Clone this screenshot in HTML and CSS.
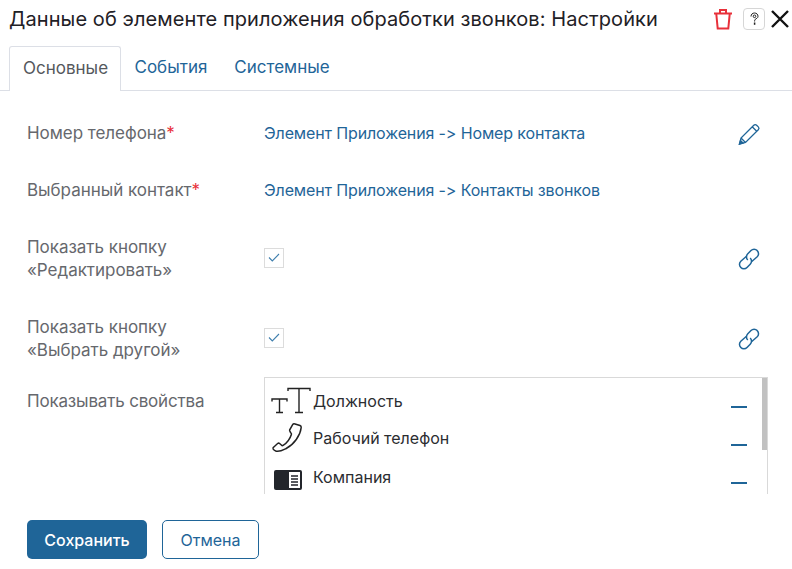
FILE: index.html
```html
<!DOCTYPE html>
<html lang="ru">
<head>
<meta charset="utf-8">
<title>Настройки</title>
<link rel="stylesheet" href="styles.css">
</head>
<body>
<div class="modal">
  <header class="head">
    <h1 class="title">Данные об элементе приложения обработки звонков: Настройки</h1>
    <div class="head-actions">
      <svg class="trash" width="20" height="22" viewBox="0 0 20 22" fill="none" stroke="#e8303a" stroke-width="2"><path d="M1 5.500h18M7 5V2h6V5M3.300 6l1.400 14.500h10.600L16.700 6"/></svg>
      <span class="help"><svg width="9" height="14" viewBox="0 0 9 14" fill="none" stroke="#222" stroke-width="1"><path d="M1 4.500C1 2.300 2.500 1 4.500 1S8 2.300 8 4.300c0 1.900-1.700 2.100-2.700 3-.5.500-.7 1-.7 2.200"/><circle cx="4.500" cy="4.300" r="1.300"/><path d="M4.600 10.500v2.300" stroke-width="1.500"/></svg></span>
      <svg class="close" width="20" height="20" viewBox="0 0 20 20" stroke="#111" stroke-width="2.400"><path d="M2 2l16 16M18 2L2 18"/></svg>
    </div>
  </header>
  <nav class="tabs">
    <span class="tab active">Основные</span>
    <span class="tab">События</span>
    <span class="tab">Системные</span>
  </nav>
  <main class="body">
    <div class="row row-single">
      <div class="label">Номер телефона<span class="req">*</span></div>
      <div class="value">Элемент Приложения -&gt; Номер контакта</div>
      <svg class="side" width="24" height="24" viewBox="0 0 24 24" fill="none" stroke="#1f6598" stroke-width="1.300"><path d="M2.500 22l1.500-6L16.800 3.200c.8-.8 2-.8 2.800 0l1.700 1.700c.8.800.8 2 0 2.800L8.500 20.500zM4 16l4.500 4.500M15.200 4.800l4.500 4.500"/><path d="M2.500 22l1-3.500 2.500 2.500z" fill="#1f6598"/></svg>
    </div>
    <div class="row row-single row-second">
      <div class="label">Выбранный контакт<span class="req">*</span></div>
      <div class="value">Элемент Приложения -&gt; Контакты звонков</div>
    </div>
    <div class="row row-check">
      <div class="label">Показать кнопку<br>«Редактировать»</div>
      <div class="value"><span class="check"><svg width="12" height="10" viewBox="0 0 12 10" fill="none" stroke="#3f7fae" stroke-width="1.100"><path d="M1 4.500L4.300 8 11 1"/></svg></span></div>
      <svg class="side" width="24" height="24" viewBox="0 0 24 24" fill="none" stroke="#1f6598" stroke-width="1.500"><path d="M9.500 9.300L3.800 14.200a4.300 4.300 0 0 0 0 6.200 4.300 4.300 0 0 0 6.200 0l3.200-3.200a4.300 4.300 0 0 0 0-6.200"/><path d="M14.500 14.700l5.700-4.900a4.300 4.300 0 0 0 0-6.200 4.300 4.300 0 0 0-6.200 0l-3.200 3.200a4.300 4.300 0 0 0 0 6.200"/></svg>
    </div>
    <div class="row row-check row-check-next">
      <div class="label">Показать кнопку<br>«Выбрать другой»</div>
      <div class="value"><span class="check"><svg width="12" height="10" viewBox="0 0 12 10" fill="none" stroke="#3f7fae" stroke-width="1.100"><path d="M1 4.500L4.300 8 11 1"/></svg></span></div>
      <svg class="side" width="24" height="24" viewBox="0 0 24 24" fill="none" stroke="#1f6598" stroke-width="1.500"><path d="M9.500 9.300L3.800 14.200a4.300 4.300 0 0 0 0 6.200 4.300 4.300 0 0 0 6.200 0l3.200-3.200a4.300 4.300 0 0 0 0-6.200"/><path d="M14.500 14.700l5.700-4.900a4.300 4.300 0 0 0 0-6.200 4.300 4.300 0 0 0-6.200 0l-3.200 3.200a4.300 4.300 0 0 0 0 6.200"/></svg>
    </div>
    <div class="row row-list">
      <div class="label">Показывать свойства</div>
      <div class="list">
        <div class="scrollbar"></div>
        <div class="item item-first">
          <svg class="item-icon" width="40" height="30" viewBox="0 0 40 30" fill="none" stroke="#222" stroke-width="1.400"><path d="M1 15.500v-2.500h15v2.500M8.500 13V26.500M5 26.500h7"/><path d="M17 5V2.500h22V5M28 2.500v24M24 26.500h8"/></svg>
          <span>Должность</span><i class="dash"></i>
        </div>
        <div class="item item-phone">
          <svg class="item-icon" width="40" height="34" viewBox="0 0 40 34" fill="none" stroke="#222" stroke-width="1.500"><path d="M24 2l5 1.500c1 .4 1.300 1 1.200 2-.8 8-7.300 17-15 21-3 1.500-6.500 3.500-10 2.700-1.200-.4-2.400-1-3-2-.4-.8-.2-1.500.4-2l4-3.700c.7-.5 1.400-.5 2 0l2 1.800c.5.400 1 .4 1.500.1 3.500-2.300 7-7 8.300-11 .2-.6 0-1-.5-1.400L19 9.500c-.5-.5-.5-1-.3-1.700l2.800-5c.5-.8 1.500-1.100 2.500-.8z"/></svg>
          <span>Рабочий телефон</span><i class="dash"></i>
        </div>
        <div class="item item-company">
          <svg class="item-icon" width="40" height="22" viewBox="0 0 40 22"><path d="M5 1h24a2 2 0 0 1 2 2v16a2 2 0 0 1-2 2H5a2 2 0 0 1-2-2V3a2 2 0 0 1 2-2z" fill="#22252b"/><path d="M18 3h11v16H18z" fill="#fff"/><path d="M20 7h7M20 10h7M20 13h7M20 16h7" stroke="#22252b" stroke-width="1.300"/></svg>
          <span>Компания</span><i class="dash"></i>
        </div>
      </div>
    </div>
  </main>
  <footer class="foot">
    <button class="btn primary" type="button">Сохранить</button>
    <button class="btn ghost" type="button">Отмена</button>
  </footer>
</div>
</body>
</html>
```

FILE: styles.css
```css
* { box-sizing: border-box; }
html, body { margin: 0; padding: 0; background: #fff; }
body { width: 792px; height: 569px; overflow: hidden; font-family: Inter, "Liberation Sans", sans-serif; }
.modal { display: flex; flex-direction: column; height: 569px; }
.head { display: flex; align-items: center; justify-content: space-between; height: 46px; padding: 0 0 8px 9px; }
.title { margin: 0; font-size: 20px; line-height: 26px; font-weight: 400; letter-spacing: 0.08px; color: #1f2126; white-space: nowrap; }
.head-actions { display: flex; align-items: center; width: 79px; height: 24px; padding-left: 0; }
.trash { margin-right: 10px; }
.help { display: flex; align-items: center; justify-content: center; width: 22px; height: 22px; margin-right: 5px; border: 1px solid #d6d6d6; border-radius: 4px; }
.tabs { display: flex; height: 45px; padding-left: 9px; border-bottom: 1px solid #dcdfe6; }
.tab { height: 45px; padding: 11px 13.500px 0; font-size: 17px; line-height: 21px; color: #1f6598; }
.tab.active { width: 112px; padding-left: 13px; color: #55585d; background: #fff; border: 1px solid #dcdfe6; border-bottom: 0; border-radius: 3px 3px 0 0; }
.body { height: 403px; padding: 0 27px; overflow: hidden; font-size: 17px; line-height: 23px; }
.row { display: grid; grid-template-columns: 237px 1fr 24px; column-gap: 0; align-items: center; padding-right: 4px; }
.row-single { margin-top: 31px; height: 23px; }
.row-single .label, .row-single .value { position: relative; top: -1px; }
.row-second { margin-top: 34px; }
.row-second .label, .row-second .value { top: 0; }
.row-check { margin-top: 34px; height: 46px; }
.row-check .check { position: relative; top: -1px; }
.row-check-next { margin-top: 34px; }
.row-list { align-items: start; margin-top: 15px; grid-template-columns: 237px 504px; padding-right: 0; }
.row-list .label { margin-top: 13px; letter-spacing: -0.18px; }
.label { color: #66686d; letter-spacing: -0.03px; }
.req { color: #e8303a; }
.value { color: #1f6598; font-size: 16px; letter-spacing: -0.13px; white-space: nowrap; }
.side { display: block; }
.check { display: flex; align-items: center; justify-content: center; width: 20px; height: 20px; border: 1px solid #dcdcdc; background: #fff; }
.list { position: relative; height: 141px; border: 1px solid #d9d9d9; border-bottom: 0; }
.scrollbar { position: absolute; top: 0; right: 0; width: 5px; height: 72px; background: #c1c1c1; }
.item { position: relative; display: flex; align-items: center; height: 38px; font-size: 16px; color: #2b2d31; }
.item-first { height: 38px; margin-top: 4px; }
.item-icon { flex: none; display: block; width: 40px; margin-left: 6px; margin-right: 2px; }
.item-company .item-icon { margin-top: 5px; }
.item span { position: relative; }
.item-phone span { top: -1px; }
.dash { position: absolute; right: 20px; top: 24px; width: 16px; height: 2px; background: #1f6598; }
.foot { display: flex; gap: 15px; padding: 26px 0 0 27px; }
.btn { height: 39px; font: 500 16px Inter, "Liberation Sans", sans-serif; border-radius: 5px; cursor: pointer; }
.primary { width: 120px; color: #fff; background: #1f6598; border: 0; }
.ghost { width: 97px; color: #1f6598; background: #fff; border: 1px solid #1f6598; font-weight: 400; }
```
